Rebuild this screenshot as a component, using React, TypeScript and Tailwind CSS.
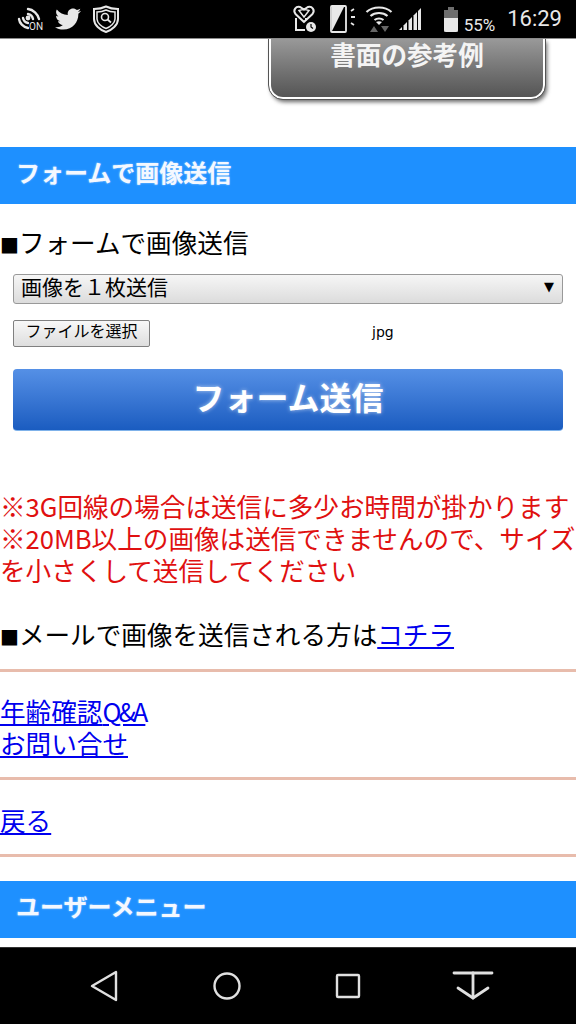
import { FaTwitter } from 'react-icons/fa';

const FONT = "font-['Noto_Sans_CJK_JP','Noto_Sans',sans-serif]";

function NfcIcon() {
  return (
    <div className="relative w-[24px] h-[24px]">
      <svg width="24" height="24" viewBox="0 0 24 24" fill="none" stroke="#e8e8e8" strokeWidth="2.4" strokeLinecap="round">
        <path d="M2 12 C2.5 16 6 20 11 21" />
        <path d="M6 11 C6.5 13.5 8.5 15.5 11 16" />
        <path d="M11 2 C16 2.5 21 7 22 12" />
        <path d="M11 7 C13.5 7.5 15.5 9.5 16 12" />
        <circle cx="11" cy="11" r="1.2" fill="#e8e8e8" />
      </svg>
      <span className="absolute left-[12px] top-[15px] text-[10px] leading-[10px] text-[#e8e8e8] font-['Roboto',sans-serif]">ON</span>
    </div>
  );
}

function ShieldIcon() {
  return (
    <svg width="28" height="28" viewBox="0 0 28 28" fill="none" stroke="#e8e8e8">
      <path d="M14 1.5 C18 3.5 22 4 26 4 V14 C26 20 20 25 14 27 C8 25 2 20 2 14 V4 C6 4 10 3.5 14 1.5Z" strokeWidth="2" />
      <path d="M14 5 C17 6.5 20 7 23 7 V14 C23 18 18 22 14 23.5 C10 22 5 18 5 14 V7 C8 7 11 6.5 14 5Z" strokeWidth="1.5" />
      <circle cx="13" cy="12" r="3.5" strokeWidth="1.6" />
      <path d="M15.5 14.5 L19 17.5" strokeWidth="1.8" />
    </svg>
  );
}

function HeartPhoneIcon() {
  return (
    <svg width="26" height="28" viewBox="0 0 26 28" fill="none" stroke="#e8e8e8" strokeWidth="2">
      <path d="M12 17 L3.5 9 C0.5 5 4 1 8 2 L12 4.5 L16 2 C20 1 23.5 5 20.5 9 Z" />
      <path d="M7 5.5 C10 4.5 14 4.5 17 5.5 L12 12 Z" strokeWidth="1.4" />
      <path d="M4 13 V25 H13" />
      <path d="M15 14 H13" />
      <circle cx="19" cy="22" r="5" fill="#e8e8e8" stroke="none" />
      <path d="M19 19 V22 L21 23.5" stroke="#000" strokeWidth="1.2" />
    </svg>
  );
}

function RotateIcon() {
  return (
    <svg width="26" height="28" viewBox="0 0 26 28" fill="none" stroke="#e8e8e8" strokeWidth="1.8">
      <rect x="2" y="1" width="15" height="26" rx="1" />
      <path d="M3 2 H15 L3 26 Z" fill="#e8e8e8" stroke="none" />
      <path d="M22 6 L25 4 M22 12 H26 M22 18 L25 20" strokeWidth="1.8" />
    </svg>
  );
}

function WifiIcon() {
  return (
    <svg width="28" height="28" viewBox="0 0 28 28" fill="none" stroke="#e8e8e8" strokeWidth="2.2">
      <path d="M1.5 7 C8 1 20 1 26.5 7" />
      <path d="M5.5 11 C10 7 18 7 22.5 11" />
      <path d="M9.5 15 C12 13 16 13 18.5 15" />
      <path d="M14 20 L11 17 C13 16 15 16 17 17 Z" fill="#e8e8e8" stroke="none" />
      <path d="M9 21 L5 27 H13 Z M16 21 H24 L20 27 Z" fill="#666" stroke="none" />
    </svg>
  );
}

function SignalIcon() {
  return (
    <svg width="24" height="24" viewBox="0 0 24 24" fill="#e8e8e8">
      <path d="M1 23 L4 20 V23 Z" />
      <path d="M5.5 18.5 L9 15 V23 H5.5 Z" />
      <path d="M10.5 13.5 L14 10 V23 H10.5 Z" />
      <path d="M15.5 8.5 L19 5 V23 H15.5 Z" />
      <path d="M20 4 L23 1 V23 H20 Z" />
    </svg>
  );
}

function BatteryIcon() {
  return (
    <svg width="16" height="25" viewBox="0 0 16 25">
      <path d="M5 0 H11 V3 H15 V25 H1 V3 H5 Z" fill="#6e6e6e" />
      <path d="M1 11 H15 V23 C15 24 14 25 13 25 H3 C2 25 1 24 1 23 Z" fill="#e8e8e8" />
    </svg>
  );
}

function StatusBar() {
  return (
    <div className="flex items-center h-[39px] shrink-0 bg-black border-b border-[#8c8c8c] pl-[17px] pr-[14px]">
      <NfcIcon />
      <FaTwitter className="ml-[14px] w-[26px] h-[26px] text-[#e8e8e8]" />
      <div className="ml-[11px]"><ShieldIcon /></div>
      <div className="flex-1" />
      <HeartPhoneIcon />
      <div className="ml-[11px]"><RotateIcon /></div>
      <div className="ml-[10px]"><WifiIcon /></div>
      <div className="ml-[5px]"><SignalIcon /></div>
      <div className="ml-[21px]"><BatteryIcon /></div>
      <span className="ml-[5px] mt-[12px] text-[17px] leading-[20px] text-[#e8e8e8] font-['Roboto',sans-serif]">55%</span>
      <span className="ml-[12px] text-[22px] leading-[24px] text-[#e8e8e8] font-['Roboto',sans-serif]">16:29</span>
    </div>
  );
}

function SectionBar({ title, px }: { title: string; px: string }) {
  return (
    <div className={`flex items-center h-[57px] pb-[8px] bg-[#1e90ff] ${px}`}>
      <h2 className="text-[24px] leading-[32px] font-bold text-[#f4f8ff] [text-shadow:0_0_2px_rgba(255,255,255,0.6)]">{title}</h2>
    </div>
  );
}

function Square() {
  return <span className="text-[20px] leading-none align-[2px] font-['DejaVu_Sans',sans-serif]">■</span>;
}

function Rule() {
  return <div className="h-[3px] bg-[#e8bcac]" />;
}

function NavBar() {
  return (
    <div className="flex items-center h-[77px] shrink-0 bg-black border-t border-[#333] pl-[89px]">
      <svg width="30" height="34" viewBox="0 0 30 34" fill="none" stroke="#e0e0e0" strokeWidth="2.4" strokeLinejoin="round">
        <path d="M27 3 V31 L3 17 Z" />
      </svg>
      <svg className="ml-[93px]" width="30" height="30" viewBox="0 0 30 30" fill="none" stroke="#e0e0e0" strokeWidth="2.4">
        <circle cx="15" cy="15" r="12.5" />
      </svg>
      <svg className="ml-[93px]" width="26" height="26" viewBox="0 0 26 26" fill="none" stroke="#e0e0e0" strokeWidth="2.4" strokeLinejoin="round">
        <rect x="2" y="2" width="22" height="22" rx="1" />
      </svg>
      <svg className="ml-[91px]" width="42" height="32" viewBox="0 0 42 32" fill="none" stroke="#e0e0e0" strokeWidth="2.8" strokeLinecap="round" strokeLinejoin="round">
        <path d="M2 3 H40" />
        <path d="M21 3 V28" />
        <path d="M6 18 L21 28 L36 18" />
      </svg>
    </div>
  );
}

export default function App() {
  return (
    <div className={`flex flex-col h-[1024px] overflow-hidden bg-white text-black ${FONT}`}>
      <StatusBar />
      <main className="flex-1 overflow-hidden">
        <div className="flex justify-end pr-[31px]">
          <div className="flex justify-center w-[276px] h-[60px] rounded-b-[14px] border-2 border-t-0 border-white outline outline-1 outline-[#555] bg-gradient-to-b from-[#999] to-[#555] shadow-[2px_3px_4px_rgba(0,0,0,0.6)]">
            <span className="text-[25.6px] leading-[30px] font-bold text-[#f4f4f4]">書面の参考例</span>
          </div>
        </div>

        <div className="mt-[48px]">
          <SectionBar title="フォームで画像送信" px="pl-[16px]" />
        </div>

        <p className="mt-[20px] text-[25.6px] leading-[36px]"><Square />フォームで画像送信</p>

        <div className="mx-[13px] mt-[14px] flex items-center justify-between h-[30px] rounded-[3px] border border-[#999] bg-gradient-to-b from-[#f6f6f6] to-[#dcdcdc] pl-[7px] pr-[8px]">
          <span className="pb-[6px] text-[21px] leading-[28px]">画像を１枚送信</span>
          <span className="pb-[4px] text-[13px] leading-[20px] font-['DejaVu_Sans',sans-serif]">▼</span>
        </div>

        <div className="mx-[13px] mt-[15px] flex items-center h-[28px]">
          <button className="w-[137px] h-[27px] pb-[6px] rounded-[2px] border border-[#808080] bg-gradient-to-b from-[#f8f8f8] to-[#dedede] text-[16px] leading-[16px]">
            ファイルを選択
          </button>
          <span className="ml-[222px] pb-[2px] text-[14px] leading-[20px] font-['DejaVu_Sans',sans-serif]">jpg</span>
        </div>

        <button className="block mx-[13px] mt-[22px] w-[550px] h-[62px] pb-[8px] rounded-[4px] border-b border-[#7fb2ea] bg-gradient-to-b from-[#5590e6] to-[#1a5cc0] text-[32px] leading-[40px] font-bold text-white [text-shadow:0_0_4px_rgba(255,255,255,0.6)]">
          フォーム送信
        </button>

        <div className="mt-[59px] text-[25.6px] leading-[32px] text-[#e01010]">
          <p>※3G回線の場合は送信に多少お時間が掛かります</p>
          <p>※20MB以上の画像は送信できませんので、サイズを小さくして送信してください</p>
        </div>

        <p className="mt-[32px] text-[25.6px] leading-[32px]">
          <Square />メールで画像を送信される方は<a href="#" className="text-[#0000ee] underline">コチラ</a>
        </p>

        <div className="mt-[19px]"><Rule /></div>

        <div className="mt-[23px] flex flex-col items-start text-[25.6px] leading-[32px] text-[#0000ee]">
          <a href="#" className="underline">年齢確認<span className="tracking-[-3px]">Q&amp;A</span></a>
          <a href="#" className="underline">お問い合せ</a>
        </div>

        <div className="mt-[18px]"><Rule /></div>

        <div className="mt-[24px] text-[25.6px] leading-[32px] text-[#0000ee]">
          <a href="#" className="underline">戻る</a>
        </div>

        <div className="mt-[18px]"><Rule /></div>

        <div className="mt-[24px]">
          <SectionBar title="ユーザーメニュー" px="pl-[16px]" />
        </div>
      </main>
      <NavBar />
    </div>
  );
}
